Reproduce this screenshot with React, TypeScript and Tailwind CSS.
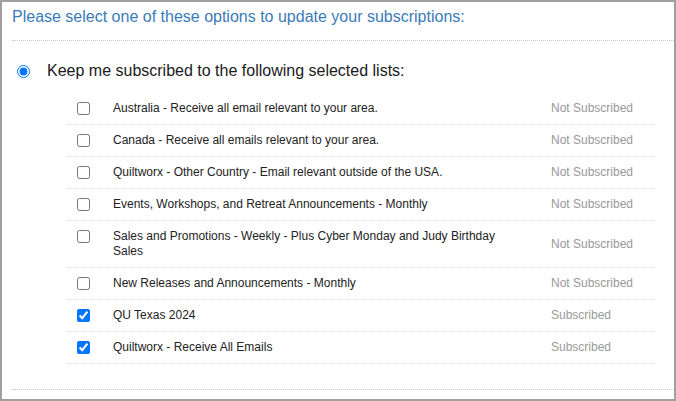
const lists = [
  { name: "Australia - Receive all email relevant to your area.", subscribed: false },
  { name: "Canada - Receive all emails relevant to your area.", subscribed: false },
  { name: "Quiltworx - Other Country - Email relevant outside of the USA.", subscribed: false },
  { name: "Events, Workshops, and Retreat Announcements - Monthly", subscribed: false },
  { name: "Sales and Promotions - Weekly - Plus Cyber Monday and Judy Birthday Sales", subscribed: false },
  { name: "New Releases and Announcements - Monthly", subscribed: false },
  { name: "QU Texas 2024", subscribed: true },
  { name: "Quiltworx - Receive All Emails", subscribed: true },
];

export default function App() {
  return (
    <div className="w-[676px] h-[401px] overflow-hidden border-2 border-[#a0a0a0] bg-white pl-[10px] font-['Liberation_Sans',Arial,sans-serif]">
      <div className="pt-[6px] pb-[14px] border-b border-dotted border-[#c6c6c6]">
        <p className="text-[16px] leading-[18px] text-[#3a7bb8]">
          Please select one of these options to update your subscriptions:
        </p>
      </div>

      <label className="flex items-center pt-[20px] h-[20px] box-content">
        <input
          type="radio"
          name="mode"
          defaultChecked
          className="ml-[5px] w-[13px] h-[13px] m-0"
        />
        <span className="ml-[17px] text-[16px] leading-[20px] text-[#1a1a1a]">
          Keep me subscribed to the following selected lists:
        </span>
      </label>

      <div className="mt-[12px] ml-[55px] w-[589px]">
        {lists.map((item) => (
          <div
            key={item.name}
            className="grid grid-cols-[46px_438px_1fr] border-b border-dotted border-[#dedede] text-[12px] leading-[15px] py-[8px]"
          >
            <div className="pl-[10px]">
              <input
                type="checkbox"
                defaultChecked={item.subscribed}
                className="mt-[1px] w-[13px] h-[13px] block"
              />
            </div>
            <div className="pr-[38px] text-[#222]">{item.name}</div>
            <div className="self-center text-[#999]">
              {item.subscribed ? "Subscribed" : "Not Subscribed"}
            </div>
          </div>
        ))}
      </div>

      <div className="h-[26px] border-b border-dotted border-[#c6c6c6]" />
    </div>
  );
}
